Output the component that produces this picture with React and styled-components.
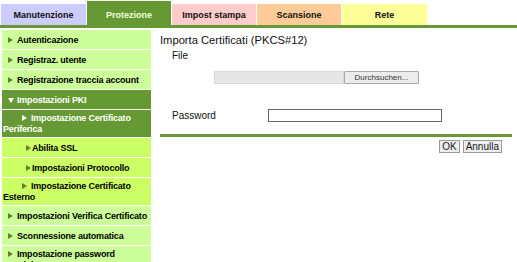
import styled, { createGlobalStyle } from "styled-components";

const GlobalStyle = createGlobalStyle`
  body {
    margin: 0;
    background: #ffffff;
    font-family: "Liberation Sans", Arial, sans-serif;
    color: #000;
  }
`;

const GREEN = "#669933";

const tabs = [
  { label: "Manutenzione", bg: "#ccccff", width: 85 },
  { label: "Protezione", bg: GREEN, active: true },
  { label: "Impost stampa", bg: "#ffcccc" },
  { label: "Scansione", bg: "#ffcc99" },
  { label: "Rete", bg: "#ffff99", width: 85 },
];

// indent = space before the arrow on the first line, gap = arrow box width
const menu = [
  { label: "Autenticazione", indent: 5, gap: 9 },
  { label: "Registraz. utente", indent: 5, gap: 9 },
  { label: "Registrazione traccia account", indent: 5, gap: 9 },
  { label: "Impostazioni PKI", indent: 5, gap: 9, open: true, tone: "dark" },
  { label: "Impostazione Certificato Periferica", indent: 19, gap: 9, tone: "dark" },
  { label: "Abilita SSL", indent: 23, gap: 6, tone: "sub" },
  { label: "Impostazioni Protocollo", indent: 23, gap: 6, tone: "sub" },
  { label: "Impostazione Certificato Esterno", indent: 19, gap: 9, tone: "sub" },
  { label: "Impostazioni Verifica Certificato", indent: 5, gap: 9 },
  { label: "Sconnessione automatica", indent: 5, gap: 9 },
  { label: "Impostazione password amministratore", indent: 5, gap: 9 },
];

const App = () => {
  return (
    <Page>
      <GlobalStyle />
      <TabBar>
        {tabs.map((t) => (
          <Tab key={t.label} $bg={t.bg} $active={t.active} $width={t.width}>
            {t.label}
          </Tab>
        ))}
      </TabBar>
      <Body>
        <Sidebar>
          {menu.map((m) => (
            <MenuItem key={m.label} $tone={m.tone}>
              <MenuText $indent={m.indent}>
                <ArrowBox $gap={m.gap}>
                  <Arrow $open={m.open} $tone={m.tone} />
                </ArrowBox>
                {m.label}
              </MenuText>
            </MenuItem>
          ))}
        </Sidebar>
        <Main>
          <Title>Importa Certificati (PKCS#12)</Title>
          <Label>File</Label>
          <FileRow>
            <FileField />
            <BrowseButton type="button">Durchsuchen...</BrowseButton>
          </FileRow>
          <PasswordRow>
            <Label>Password</Label>
            <PasswordInput type="password" />
          </PasswordRow>
          <Divider />
          <Actions>
            <Button type="button">OK</Button>
            <Button type="button">Annulla</Button>
          </Actions>
        </Main>
      </Body>
    </Page>
  );
};

export default App;

const Page = styled.div`
  width: 517px;
  height: 262px;
  overflow: hidden;
`;

const TabBar = styled.div`
  display: flex;
  align-items: flex-end;
  gap: 1px;
  height: 25px;
  padding-left: 1px;
  border-bottom: 3px solid ${GREEN};
`;

const Tab = styled.div`
  width: ${(p) => p.$width || 84}px;
  height: ${(p) => (p.$active ? 24 : 21)}px;
  box-sizing: border-box;
  padding-top: ${(p) => (p.$active ? 3 : 0)}px;
  display: flex;
  align-items: center;
  justify-content: center;
  background: ${(p) => p.$bg};
  color: ${(p) => (p.$active ? "#eeffdd" : "#111")};
  font-size: 9px;
  font-weight: bold;
`;

const Body = styled.div`
  display: flex;
  align-items: flex-start;
`;

const Sidebar = styled.div`
  width: 149px;
  margin: 2px 0 0 2px;
  display: flex;
  flex-direction: column;
  gap: 1px;
`;

const MenuItem = styled.div`
  min-height: 19px;
  box-sizing: border-box;
  display: flex;
  align-items: center;
  padding: 3px 1px 2px 1px;
  background: ${(p) =>
    p.$tone === "dark" ? GREEN : p.$tone === "sub" ? "#ccff66" : "#ccff99"};
  color: ${(p) => (p.$tone === "dark" ? "#ffffff" : "#000")};
`;

const MenuText = styled.div`
  text-indent: ${(p) => p.$indent}px;
  font-size: 9px;
  font-weight: bold;
  letter-spacing: -0.2px;
  line-height: 11px;
`;

const ArrowBox = styled.span`
  display: inline-block;
  text-indent: 0;
  width: ${(p) => p.$gap}px;
`;

const Arrow = styled.span`
  display: inline-block;
  width: 0;
  height: 0;
  ${(p) =>
    p.$open
      ? `border-top: 5px solid #ffffff;
         border-left: 3px solid transparent;
         border-right: 3px solid transparent;`
      : `border-left: 5px solid ${p.$tone === "dark" ? "#ffffff" : "#6b7a33"};
         border-top: 3px solid transparent;
         border-bottom: 3px solid transparent;`}
`;

const Main = styled.div`
  flex: 1;
  padding: 6px 5px 0 9px;
`;

const Title = styled.div`
  font-size: 11.2px;
  line-height: 13px;
  color: #111;
`;

const Label = styled.div`
  font-size: 10px;
  line-height: 12px;
  padding-left: 12px;
  margin-top: 3px;
  color: #111;
`;

const FileRow = styled.div`
  display: flex;
  margin: 9px 0 0 54px;
  height: 13px;
`;

const FileField = styled.div`
  width: 130px;
  background: #e6e6e6;
  border: 1px solid #d8d8d8;
  box-sizing: border-box;
`;

const BrowseButton = styled.button`
  width: 75px;
  height: 13px;
  padding: 0;
  font-family: "Liberation Sans", Arial, sans-serif;
  font-size: 8px;
  color: #333;
  background: #ececec;
  border: 1px solid #aaaaaa;
  border-radius: 1px;
`;

const PasswordRow = styled.div`
  display: flex;
  align-items: center;
  margin-top: 25px;

  ${Label} {
    width: 96px;
    margin-top: 0;
  }
`;

const PasswordInput = styled.input`
  width: 174px;
  height: 13px;
  box-sizing: border-box;
  border: 1px solid #666;
  padding: 0;
`;

const Divider = styled.div`
  height: 3px;
  margin-top: 12px;
  background: ${GREEN};
`;

const Actions = styled.div`
  display: flex;
  justify-content: flex-end;
  gap: 3px;
  margin: 3px 10px 0 0;
`;

const Button = styled.button`
  height: 13px;
  padding: 0 2px;
  font-family: "Liberation Sans", Arial, sans-serif;
  font-size: 10px;
  line-height: 11px;
  color: #222;
  background: #eeeeee;
  border: 1px solid #999;
  border-radius: 0;
`;
